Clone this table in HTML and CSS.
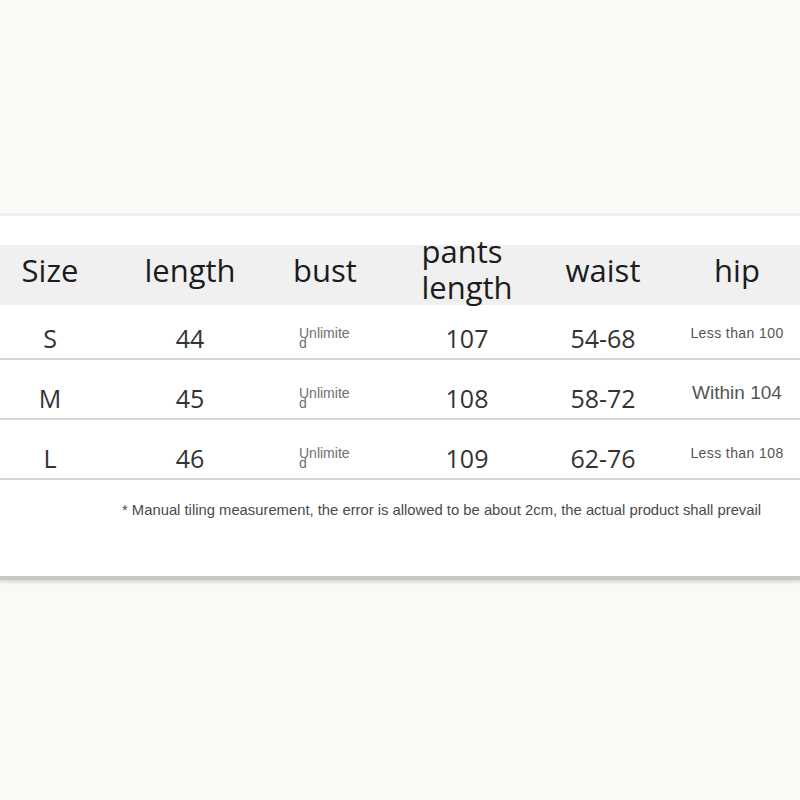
FILE: index.html
```html
<!DOCTYPE html>
<html lang="en">
<head>
<meta charset="utf-8">
<title>Size chart</title>
<link rel="stylesheet" href="styles.css">
</head>
<body>
<div class="page">
  <div class="top-space"></div>
  <section class="card">
    <div class="row head">
      <div class="cell c1">Size</div>
      <div class="cell c2">length</div>
      <div class="cell c3">bust</div>
      <div class="cell c4"><span class="wrap">pants length</span></div>
      <div class="cell c5">waist</div>
      <div class="cell c6">hip</div>
    </div>
    <div class="row data first">
      <div class="cell c1">S</div>
      <div class="cell c2">44</div>
      <div class="cell c3"><span class="small">Unlimited</span></div>
      <div class="cell c4">107</div>
      <div class="cell c5">54-68</div>
      <div class="cell c6"><span class="note">Less than 100</span></div>
    </div>
    <div class="row data">
      <div class="cell c1">M</div>
      <div class="cell c2">45</div>
      <div class="cell c3"><span class="small">Unlimited</span></div>
      <div class="cell c4">108</div>
      <div class="cell c5">58-72</div>
      <div class="cell c6"><span class="note big">Within 104</span></div>
    </div>
    <div class="row data">
      <div class="cell c1">L</div>
      <div class="cell c2">46</div>
      <div class="cell c3"><span class="small">Unlimited</span></div>
      <div class="cell c4">109</div>
      <div class="cell c5">62-76</div>
      <div class="cell c6"><span class="note">Less than 108</span></div>
    </div>
    <p class="footnote">* Manual tiling measurement, the error is allowed to be about 2cm, the actual product shall prevail</p>
  </section>
</div>
</body>
</html>
```

FILE: styles.css
```css
html, body {
  margin: 0;
  padding: 0;
  background: #faf9f5;
}

.page {
  width: 800px;
  height: 800px;
  overflow: hidden;
  background: #faf9f5;
}

.top-space {
  height: 213px;
}

.card {
  background: #ffffff;
  border-top: 3px solid #f2f0ec;
  padding-top: 29px;
  height: 331px;
  border-bottom: 4px solid #c9c7c6;
  box-shadow: 0 3px 2px #e2e0dc;
  box-sizing: content-box;
}

.row {
  display: grid;
  grid-template-columns: 100px 180px 90px 194px 78px 158px;
}

.cell {
  display: flex;
  align-items: center;
  justify-content: center;
  white-space: nowrap;
  min-height: 0;
}

.head {
  height: 60px;
  grid-template-rows: 60px;
  background: #f0f0f0;
  font-family: "Open Sans", "Noto Sans", sans-serif;
  font-size: 31px;
  color: #1c1c1c;
}

.head .cell {
  line-height: 34px;
  padding-bottom: 10px;
}

.head .c4 {
  padding-bottom: 12px;
}

.wrap {
  display: inline-block;
  width: min-content;
  white-space: normal;
  text-align: left;
  line-height: 36px;
}

.head .c6 {
  padding-left: 32px;
}

.data {
  border-bottom: 2px solid #d6d6d6;
  font-family: "Open Sans", "Noto Sans", sans-serif;
  font-size: 25px;
  color: #333333;
  align-items: end;
  padding-bottom: 5px;
  box-sizing: border-box;
  height: 60px;
}

.data.first {
  height: 55px;
}

.data .cell {
  height: 30px;
  line-height: 30px;
}

.data .c6 {
  padding-left: 32px;
}

.small {
  display: inline-block;
  width: 52px;
  white-space: normal;
  word-break: break-all;
  text-align: left;
  font-family: "Liberation Sans", Arial, sans-serif;
  font-size: 14px;
  line-height: 10px;
  color: #6f6f6f;
}

.note {
  font-family: "Liberation Sans", Arial, sans-serif;
  font-size: 14px;
  letter-spacing: 0.4px;
  line-height: 16px;
  color: #555555;
  margin-bottom: 10px;
}

.note.big {
  font-size: 19px;
  letter-spacing: 0;
  line-height: 20px;
}

.footnote {
  margin: 22px 0 0 0;
  padding-left: 122px;
  font-family: "Liberation Sans", Arial, sans-serif;
  font-size: 14.8px;
  line-height: 16px;
  color: #4a4a4a;
  white-space: nowrap;
}
```
